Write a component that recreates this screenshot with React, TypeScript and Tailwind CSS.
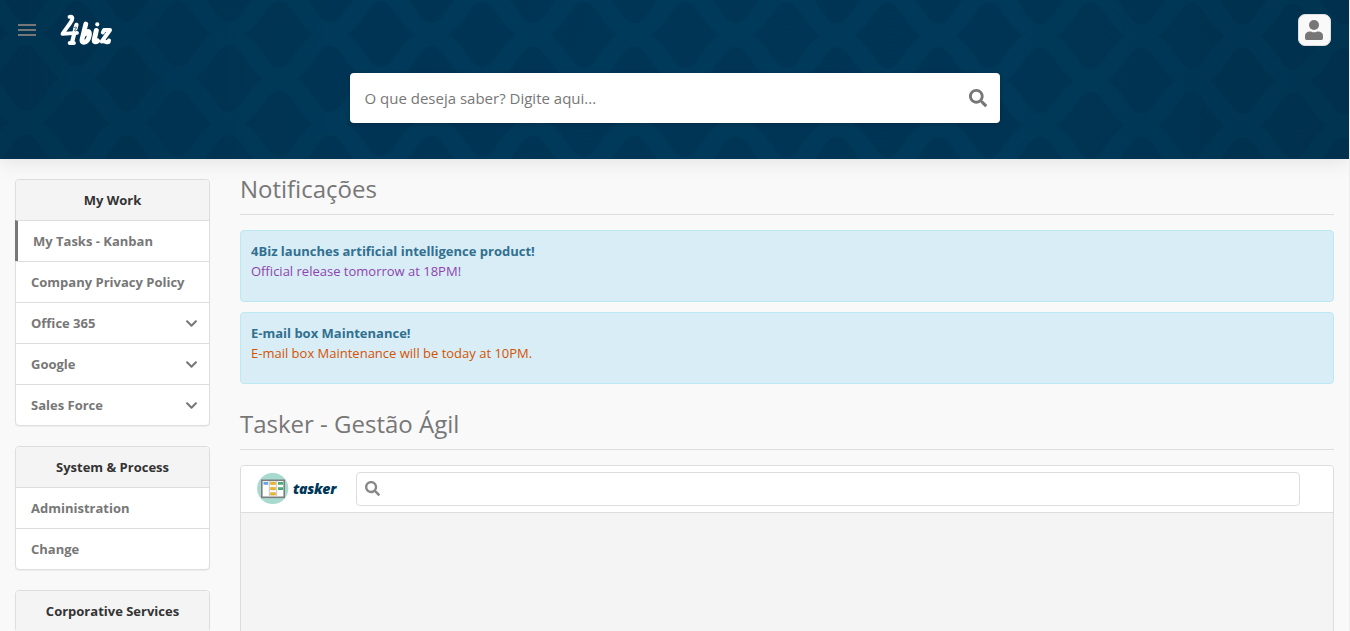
import { FaChevronDown, FaSearch } from "react-icons/fa";

const groups = [
  {
    title: "My Work",
    items: [
      { label: "My Tasks - Kanban", active: true },
      { label: "Company Privacy Policy" },
      { label: "Office 365", expandable: true },
      { label: "Google", expandable: true },
      { label: "Sales Force", expandable: true },
    ],
  },
  { title: "System & Process", items: [{ label: "Administration" }, { label: "Change" }] },
  { title: "Corporative Services", items: [] },
] as { title: string; items: { label: string; active?: boolean; expandable?: boolean }[] }[];

const notices = [
  { title: "4Biz launches artificial intelligence product!", body: "Official release tomorrow at 18PM!", tone: "text-[#8e44ad]" },
  { title: "E-mail box Maintenance!", body: "E-mail box Maintenance will be today at 10PM.", tone: "text-[#d35400]" },
];

const diamond =
  "M-34 0C-25 -6 -20 -14 -14 -22C-9 -30 -5 -33 0 -33S9 -30 14 -22C20 -14 25 -6 34 0C25 6 20 14 14 22C9 30 5 33 0 33S-9 30 -14 22C-20 14 -25 6 -34 0Z";

function HeaderPattern() {
  return (
    <svg className="absolute inset-0 h-full w-full" aria-hidden="true">
      <defs>
        <radialGradient id="glow" gradientUnits="userSpaceOnUse" cx="675" cy="60" r="675">
          <stop offset="0" stopColor="#003a5a" />
          <stop offset="0.5" stopColor="#003959" />
          <stop offset="1" stopColor="#003451" />
        </radialGradient>
        <pattern id="lattice" width="101.4" height="89.3" patternUnits="userSpaceOnUse" patternTransform="translate(26 -11) skewY(0.12)">
          <g fill="#001f38" fillOpacity="0.17">
            <path d={diamond} transform="translate(50.7 44.65)" />
            <path d={diamond} />
            <path d={diamond} transform="translate(101.4 0)" />
            <path d={diamond} transform="translate(0 89.3)" />
            <path d={diamond} transform="translate(101.4 89.3)" />
          </g>
        </pattern>
      </defs>
      <rect width="100%" height="100%" fill="url(#glow)" />
      <rect width="100%" height="100%" fill="url(#lattice)" />
    </svg>
  );
}

function Logo() {
  return (
    <svg className="h-[32px] w-[54px]" viewBox="0 0 54 32" fill="none" stroke="#fff" strokeLinecap="round" strokeLinejoin="round" aria-label="4biz">
      <path d="M10.500 2.800C13 2.300 14.300 3.500 13 6C10.500 11 7 14.500 3.500 19.800L18 18.800" strokeWidth="3.800" />
      <path d="M17.500 10.800C16 15 15 22 13 28.300M10.800 29H14.800" strokeWidth="4.200" />
      <path d="M15.500 13.500C17.500 12 18.500 14 16.500 15C14.500 16.500 16 18 17.800 16.300" stroke="#003553" strokeWidth="0.800" />
      <path d="M26.800 10L23 25.500C22.300 29 26 29.300 28.300 26.500S31.300 17.300 29.300 17.300S26 20 26 20" strokeWidth="4.800" />
      <path d="M37.300 16.500L35.300 25.500C34.900 28 36.500 28.500 38.500 27" strokeWidth="5" />
      <circle cx="38.300" cy="10.300" r="1.500" fill="#fff" strokeWidth="1.200" />
      <path d="M43.800 18.500L45 16H51L42.800 27.500C45.800 26.300 47.500 29 49.500 28L50 26.500" strokeWidth="4" />
    </svg>
  );
}

function TaskerIcon() {
  return (
    <svg className="h-8 w-8" viewBox="0 0 32 32" aria-hidden="true">
      <circle cx="15.700" cy="15.500" r="15.600" fill="#a8dacf" />
      <rect x="4.800" y="7.300" width="22.400" height="17" fill="#fff" stroke="#7d7d7d" strokeWidth="1.600" />
      <path d="M12.300 8V24M19.700 8V24" stroke="#c4c4c4" strokeWidth="1" />
      <path d="M6.500 9h4.700v2.800H6.500z" fill="#62a7df" />
      <path d="M13.500 9h5v2.800h-5zM13.500 14.200h5V17h-5zM13.500 19.400h5v2.800h-5z" fill="#efb91d" stroke="#a18435" strokeWidth=".3" />
      <path d="M21 9h5v2.800h-5zM21 14.200h5V17h-5z" fill="#48ab79" />
    </svg>
  );
}

function Header() {
  return (
    <header className="relative h-[159px] bg-[#003350] shadow-[0_2px_20px_rgba(0,0,0,0.1)]">
      <HeaderPattern />
      <div className="relative flex h-[60px] items-center pr-[18px] pl-[17px]">
        <button className="flex w-5 flex-col gap-[3px] px-px" aria-label="Menu">
          <span className="h-0.5 w-[18px] bg-[#777]" />
          <span className="h-0.5 w-[18px] bg-[#777]" />
          <span className="h-0.5 w-[18px] bg-[#777]" />
        </button>
        <div className="ml-[22px]"><Logo /></div>
        <button className="ml-auto flex h-8 w-[33px] items-center rounded-[7px] border border-[#ddd] bg-[#f9f9f9] pb-px pl-1.5" aria-label="User">
          <svg className="h-5 w-[18px]" viewBox="0 0 18 20" fill="#777">
            <circle cx="9" cy="5" r="5" />
            <path d="M0 18v-2c0-3 2-4.500 5-4.500 1.500 0 2 .8 4 .8s2.500-.8 4-.8c3 0 5 1.500 5 4.500v2q0 2-1.500 2h-15Q0 20 0 18Z" />
          </svg>
        </button>
      </div>
      <div className="relative mt-[13px] ml-[350px] flex h-[50px] w-[650px] items-center justify-between rounded-[4px] bg-white pr-[13px] pl-[14.5px] shadow-[0_1px_4px_rgba(0,0,0,0.2)]">
        <span className="text-[15px] text-[#777]">O que deseja saber? Digite aqui...</span>
        <FaSearch className="size-[18px] text-[#777]" />
      </div>
    </header>
  );
}

export default function App() {
  return (
    <div className="h-[631px] overflow-hidden border-r border-[#eee] bg-[#f9f9f9] font-['Open_Sans',sans-serif] text-[13px] text-[#777]">
      <Header />
      <div className="flex pr-[15px] pl-[15px]">
        <aside className="flex w-[195px] shrink-0 flex-col gap-5 pt-5">
          {groups.map((g) => (
            <section key={g.title} className="rounded-[4px] border border-[#ddd] bg-white shadow-[0_1px_1px_rgba(0,0,0,0.05)]">
              <h3 className="flex h-10 items-center justify-center rounded-t-[3px] bg-[#f4f4f4] pt-0.5 font-bold text-[#333]">{g.title}</h3>
              {g.items.map((i) => (
                <div
                  key={i.label}
                  className={
                    i.active
                      ? "-ml-px flex h-[41px] items-center border-t border-l-[3px] border-t-[#ddd] border-l-[#777] pt-px pr-3 pl-[15px] font-bold"
                      : "flex h-[41px] items-center justify-between border-t border-[#ddd] pt-px pr-[11.5px] pl-[15px] font-bold"
                  }
                >
                  {i.label}
                  {i.expandable && <FaChevronDown className="size-[13px]" />}
                </div>
              ))}
            </section>
          ))}
        </aside>
        <main className="ml-[30px] min-w-0 flex-1">
          <h2 className="flex h-14 items-center border-b border-[#ddd] pt-[5px] text-[24px]">Notificações</h2>
          <div className="mt-[15px] flex flex-col gap-2.5">
            {notices.map((n) => (
              <article key={n.title} className="h-[72px] rounded-[4px] border border-[#bce8f1] bg-[#d9edf7] px-2.5 pt-2.5 leading-5">
                <p className="font-bold text-[#31708f]">{n.title}</p>
                <p className={n.tone}>{n.body}</p>
              </article>
            ))}
          </div>
          <h2 className="mt-[10px] flex h-14 items-center border-b border-[#ddd] pt-[5px] text-[24px]">Tasker - Gestão Ágil</h2>
          <section className="mt-[15px] h-[240px] rounded-[4px] border border-[#ddd] bg-[#f4f4f4]">
            <div className="flex h-[47px] items-center rounded-t-[3px] border-b border-[#ddd] bg-white pr-[33px] pl-4">
              <TaskerIcon />
              <span className="ml-1 w-[63px] pb-0.5 text-[14px] font-extrabold tracking-[-0.3px] text-[#003758] italic">tasker</span>
              <div className="flex h-[34px] flex-1 items-center rounded-[4px] border border-[#ddd] bg-white pb-px pl-2">
                <FaSearch className="size-[15px] text-[#888]" />
              </div>
            </div>
          </section>
        </main>
      </div>
    </div>
  );
}
